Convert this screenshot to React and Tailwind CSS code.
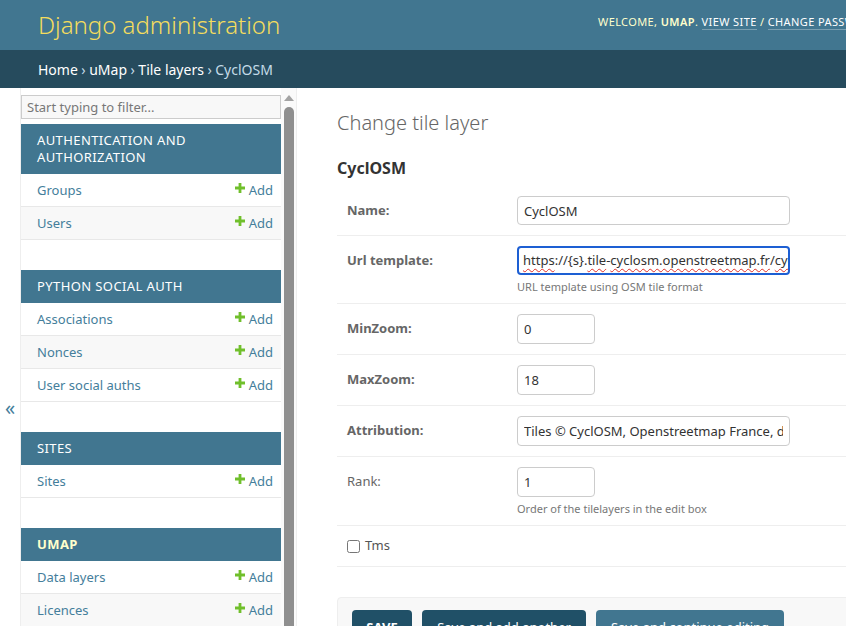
const modules = [
  { name: 'Authentication and Authorization', models: ['Groups', 'Users'] },
  { name: 'Python Social Auth', models: ['Associations', 'Nonces', 'User social auths'] },
  { name: 'Sites', models: ['Sites'] },
  { name: 'uMap', current: true, models: ['Data layers', 'Licences', 'Maps', 'Pictograms', 'Tile layers'] },
];

const fields = [
  { label: 'Name', value: 'CyclOSM', required: true, size: 'wide' },
  { label: 'Url template', required: true, url: true, help: 'URL template using OSM tile format' },
  { label: 'MinZoom', value: '0', required: true, size: 'narrow' },
  { label: 'MaxZoom', value: '18', required: true, size: 'narrow' },
  { label: 'Attribution', value: 'Tiles © CyclOSM, Openstreetmap France, data © OpenStreetMap contributors', required: true, size: 'wide', tall: true },
  { label: 'Rank', value: '1', size: 'narrow', help: 'Order of the tilelayers in the edit box' },
];

const PlusIcon = () => (
  <svg width="10" height="10" viewBox="0 0 10 10" className="mt-[-4px]">
    <path d="M3.6 0h2.8v3.6H10v2.8H6.4V10H3.6V6.4H0V3.6h3.6z" fill="#70bf2b" />
  </svg>
);

const Spell = ({ children }) => (
  <span className="underline decoration-wavy decoration-[#e0302a] decoration-1 underline-offset-[3px]">{children}</span>
);

const Header = () => (
  <div className="h-[50px] bg-[#417690] flex items-center pl-[38px] whitespace-nowrap">
    <h1 className="w-[560px] flex-none text-[24px] font-light text-[#f5dd5d] leading-[30px]">Django administration</h1>
    <div className="mb-[6px] text-[11px] uppercase tracking-[0.4px] text-[#ffc]">
      Welcome, <strong className="font-semibold">uMap</strong>.{' '}
      <a className="text-white border-b border-white/30">View site</a> /{' '}
      <a className="text-white border-b border-white/30">Change password</a> /{' '}
      <a className="text-white border-b border-white/30">Log out</a>
    </div>
  </div>
);

const Breadcrumbs = () => (
  <div className="h-[38px] bg-[#264b5d] flex items-center px-[38px] text-[14px] text-[#c4dce8] whitespace-nowrap">
    <a className="text-white">Home</a>
    <span className="mx-[3.5px]">›</span>
    <a className="text-white">uMap</a>
    <span className="mx-[3.5px]">›</span>
    <a className="text-white">Tile layers</a>
    <span className="mx-[3.5px]">›</span>
    <span>CyclOSM</span>
  </div>
);

const Sidebar = () => (
  <div className="flex flex-none">
    <button className="w-[21px] h-[640px] flex-none border-r border-[#eee] flex items-center justify-center text-[20px] text-[#447e9b]">
      «
    </button>
    <div className="w-[260px] flex-none">
      <input
        className="mt-[7px] mb-[5px] w-full h-[24px] border border-[#ccc] bg-[#f8f8f8] px-[5px] text-[13px] text-[#333] placeholder:text-[#777] outline-none"
        placeholder="Start typing to filter..."
      />
      {modules.map((m) => (
        <div key={m.name} className="mb-[30px]">
          <div
            className={`bg-[#417690] px-[16px] py-[8px] text-[13px] leading-[17px] uppercase tracking-[0.4px] ${
              m.current ? 'font-bold text-[#ffc]' : 'text-white'
            }`}
          >
            {m.name}
          </div>
          {m.models.map((name, i) => (
            <div
              key={name}
              className={`flex items-center justify-between border-b border-[#e8e8e8] pl-[16px] pr-[8px] py-[8px] text-[13px] leading-[16px] text-[#447e9b] ${
                i % 2 ? 'bg-[#f8f8f8]' : 'bg-white'
              }`}
            >
              <span>{name}</span>
              <span className="flex items-center gap-[4px]">
                <PlusIcon />
                Add
              </span>
            </div>
          ))}
        </div>
      ))}
    </div>
    {/* sidebar scrollbar */}
    <div className="w-[16px] flex-none flex flex-col items-center bg-[#fafafa] border-r border-[#eee] pt-[7px]">
      <div className="w-0 h-0 border-x-[5px] border-x-transparent border-b-[6px] border-b-[#a3a3a3]" />
      <div className="mt-[6px] w-[10px] flex-1 bg-[#8f8f8f] rounded-t-full" />
    </div>
  </div>
);

const FieldRow = ({ f }) => (
  <div className="flex border-b border-[#eee] p-[10px]">
    <label
      className={`w-[170px] flex-none pt-[5px] text-[13px] leading-[18px] text-[#666] ${f.required ? 'font-bold' : ''}`}
    >
      {f.label}:
    </label>
    <div>
      {f.url ? (
        <div className="w-[273px] h-[29px] rounded-[4px] border-2 border-[#1d5fd3] px-[5px] flex items-center overflow-hidden whitespace-nowrap text-[13px] text-[#333]">
          <span className="inline-block w-px h-[15px] bg-black -mr-px" />
          <Spell>https</Spell>://{'{s}'}.<Spell>tile</Spell>-<Spell>cyclosm.openstreetmap.fr</Spell>/<Spell>cyclosm</Spell>/{'{z}'}/{'{x}'}/{'{y}'}.png
        </div>
      ) : (
        <input
          readOnly
          defaultValue={f.value}
          className={`rounded-[4px] border border-[#ccc] px-[6px] text-[13px] text-[#333] bg-white outline-none ${
            f.size === 'narrow' ? 'w-[78px] h-[30px]' : f.tall ? 'w-[273px] h-[30px]' : 'w-[273px] h-[29px]'
          }`}
        />
      )}
      {f.help && <div className="mt-[5px] text-[11px] leading-[13px] text-[#777]">{f.help}</div>}
    </div>
  </div>
);

const Main = () => (
  <div className="w-[620px] flex-none px-[40px] pt-[22px]">
    <h1 className="text-[20px] font-light leading-[26px] text-[#666]">Change tile layer</h1>
    <h2 className="mt-[21px] mb-[7px] text-[16px] font-bold leading-[22px] text-[#333]">CyclOSM</h2>
    <div>
      {fields.map((f) => (
        <FieldRow key={f.label} f={f} />
      ))}
      <div className="flex items-center border-b border-[#eee] px-[10px] h-[41px]">
        <input type="checkbox" className="w-[13px] h-[13px] m-0" />
        <label className="ml-[5px] text-[13px] text-[#555]">Tms</label>
      </div>
    </div>
    <div className="mt-[30px] flex gap-[10px] rounded-[4px] border border-[#eee] bg-[#f8f8f8] px-[14px] pt-[12px] pb-[12px]">
      <button className="h-[35px] w-[60px] rounded-[4px] bg-[#205067] text-white text-[13px] font-bold uppercase">Save</button>
      <button className="h-[35px] w-[164px] rounded-[4px] bg-[#205067] text-white text-[13px]">Save and add another</button>
      <button className="h-[35px] w-[188px] rounded-[4px] bg-[#417690] text-white text-[13px]">Save and continue editing</button>
    </div>
  </div>
);

export default function App() {
  return (
    <div className="w-full h-screen overflow-hidden bg-white font-['Noto_Sans',sans-serif]">
      <Header />
      <Breadcrumbs />
      <div className="flex">
        <Sidebar />
        <Main />
      </div>
    </div>
  );
}
